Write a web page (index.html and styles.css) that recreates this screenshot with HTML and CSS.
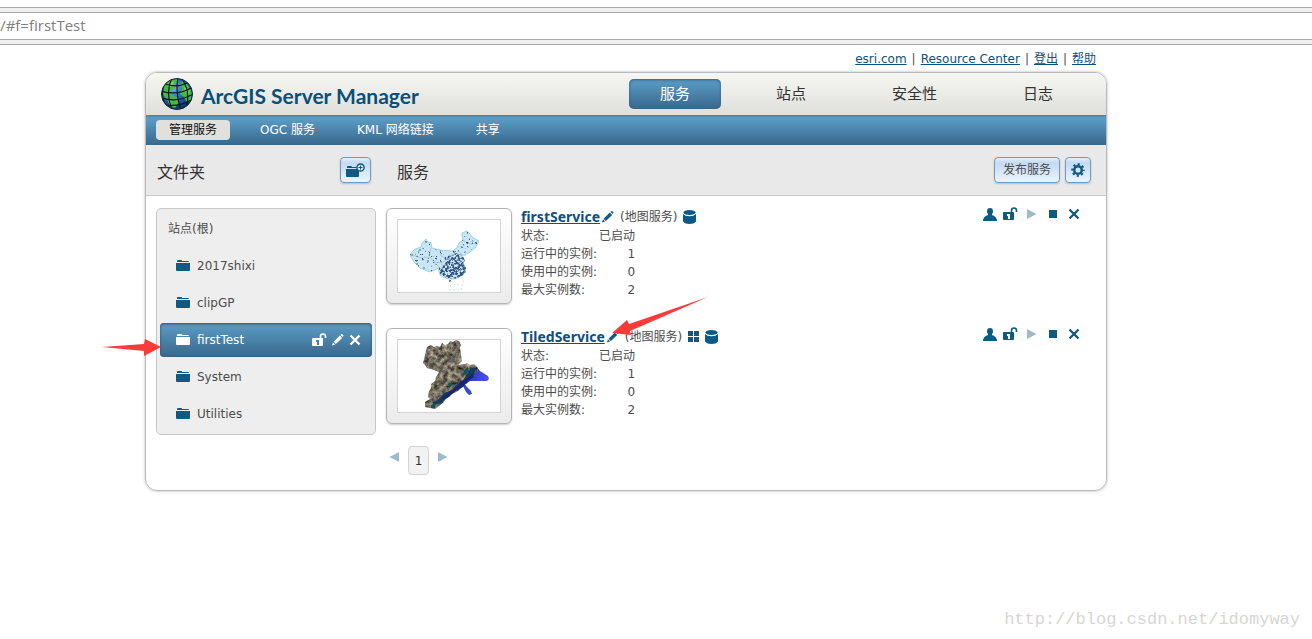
FILE: index.html
```
<!DOCTYPE html>
<html lang="zh-CN">
<head>
    <meta charset="UTF-8">
    <meta name="viewport" content="width=device-width, initial-scale=1.0">
    <title>ArcGIS Server Manager</title>
    <link rel="stylesheet" href="styles.css">
</head>
<body>
    <!-- Shared icon shapes -->
    <svg class="sprite" aria-hidden="true">
        <symbol id="folder" viewBox="0 0 14 12">
            <path d="M1 2V1q0-1 1-1h3q1 0 1 1h6q1 0 1 1z"/>
            <path d="M0 3h14v7q0 1-1 1H1q-1 0-1-1z"/>
        </symbol>
        <symbol id="unlock" viewBox="0 0 15 14">
            <path fill-rule="evenodd" d="M1 5h9q1 0 1 1v6q0 1-1 1H1q-1 0-1-1V6q0-1 1-1zM4 7v2h1v3h2V7z"/>
            <path d="M8.500 5V3.500Q8.500 1 11 1t2.500 2.500V5" fill="none" stroke="currentColor" stroke-width="1.600"/>
        </symbol>
        <symbol id="pencil" viewBox="0 0 13 13">
            <path d="M0 12.500l1-3.500 2.500 2.500zM1.700 8.300l6.800-6.600 2.500 2.500-6.800 6.600zM9.200 1l.8-.7q.6-.5 1.200 0l1 1q.6.6 0 1.200l-.6.700z"/>
        </symbol>
        <symbol id="cross" viewBox="0 0 12 12">
            <path d="M1.500 1.500l9 9M10.500 1.500l-9 9" fill="none" stroke="currentColor" stroke-width="2.300"/>
        </symbol>
        <symbol id="user" viewBox="0 0 14 13">
            <ellipse cx="7" cy="3.200" rx="3" ry="3.200"/>
            <path d="M5 5h4v2q4 1 5 5v1H0v-1q1-4 5-5z"/>
        </symbol>
        <symbol id="play" viewBox="0 0 10 10">
            <path d="M0 0l9.500 5L0 10z"/>
        </symbol>
        <symbol id="stop" viewBox="0 0 8 8">
            <path d="M0 0h8v8H0z"/>
        </symbol>
        <symbol id="database" viewBox="0 0 13 14">
            <ellipse cx="6.500" cy="2.500" rx="6" ry="2.500"/>
            <path d="M0 4q2 2.300 6.500 2.300T13 4v7.500Q11 14 6.500 14T0 11.500z"/>
        </symbol>
        <symbol id="tiles" viewBox="0 0 11 11">
            <path d="M0 0h5v5H0zM6 0h5v5H6zM0 6h5v5H0zM6 6h5v5H6z"/>
        </symbol>
    </svg>

    <div class="address-bar">
        <input type="text" class="address" value="r/#f=firstTest" aria-label="地址">
    </div>

    <div class="page">
        <div class="links">
            <a href="#">esri.com</a><span>|</span><a href="#">Resource Center</a><span>|</span><a href="#">登出</a><span>|</span><a href="#">帮助</a>
        </div>

        <div class="panel">
            <header class="header">
                <svg class="globe" viewBox="0 0 34 34">
                    <defs>
                        <radialGradient id="ocean" cx="35%" cy="30%" r="75%">
                            <stop offset="0" stop-color="#7ab8ee"/>
                            <stop offset="0.5" stop-color="#2467b4"/>
                            <stop offset="1" stop-color="#0b2f66"/>
                        </radialGradient>
                        <clipPath id="globeClip"><circle cx="17" cy="17" r="15"/></clipPath>
                    </defs>
                    <circle cx="17" cy="17" r="15.500" fill="url(#ocean)"/>
                    <g clip-path="url(#globeClip)">
                        <path fill="#48b649" d="M4 9Q9 2 17 2l2 3-5 2 1 4-4 3 1 4 5 2 2 5-4 6-5-2-3-7-4-4zM22 4l6 4 4 7-1 8-4 3-3-6-4-3 2-5-2-4z"/>
                        <path fill="#8ccf56" d="M8 7l6-3-1 4-5 3zM24 10l4 2 1 5-4-2z"/>
                        <g fill="none" stroke="#0a1a20" stroke-width="1.200">
                            <path d="M12 1Q5 15 12 33M18 1q-3 16 3 32M22 2q9 13 4 29M5 6Q-1 18 7 30"/>
                            <path d="M5 7q12 4 22-1M1 14q16 5 30-3M2 21q16 5 31-4M6 28q13 2 25-5"/>
                        </g>
                    </g>
                    <circle cx="17" cy="17" r="15.500" fill="none" stroke="#14242c"/>
                </svg>
                <h1 class="title">ArcGIS Server Manager</h1>
                <nav class="tabs">
                    <a href="#" class="tab active">服务</a>
                    <a href="#" class="tab">站点</a>
                    <a href="#" class="tab">安全性</a>
                    <a href="#" class="tab">日志</a>
                </nav>
            </header>

            <nav class="subnav">
                <a href="#" class="active">管理服务</a>
                <a href="#">OGC 服务</a>
                <a href="#">KML 网络链接</a>
                <a href="#">共享</a>
            </nav>

            <div class="toolbar">
                <div class="toolbar-folders">
                    <h2>文件夹</h2>
                    <button class="btn" aria-label="新建文件夹">
                        <svg class="new-folder" viewBox="0 0 19 14">
                            <path d="M1 5V4q0-1 1-1h3q1 0 1 1h4l1 1zM0 6h11l2 2v5q0 1-1 1H1q-1 0-1-1z"/>
                            <circle cx="14.500" cy="4.500" r="3.600" fill="#d9e9fa" stroke="currentColor" stroke-width="1.500"/>
                            <path d="M14 2.500h1V4h1.500v1H15v1.500h-1V5h-1.500V4H14z"/>
                        </svg>
                    </button>
                </div>
                <div class="toolbar-services">
                    <h2>服务</h2>
                    <button class="btn publish">发布服务</button>
                    <button class="btn" aria-label="设置">
                        <svg class="gear" viewBox="0 0 16 16">
                            <circle cx="8" cy="8" r="4.300" fill="none" stroke="currentColor" stroke-width="2.800"/>
                            <circle cx="8" cy="8" r="6.500" fill="none" stroke="currentColor" stroke-width="2.400" stroke-dasharray="2.553 2.553" stroke-dashoffset="1.276"/>
                        </svg>
                    </button>
                </div>
            </div>

            <div class="content">
                <ul class="folders">
                    <li class="root"><a href="#">站点(根)</a></li>
                    <li><a href="#"><svg class="folder"><use href="#folder"/></svg>2017shixi</a></li>
                    <li><a href="#"><svg class="folder"><use href="#folder"/></svg>clipGP</a></li>
                    <li class="selected">
                        <a href="#"><svg class="folder"><use href="#folder"/></svg>firstTest</a>
                        <button class="icon-btn" aria-label="权限"><svg class="lock"><use href="#unlock"/></svg></button>
                        <button class="icon-btn" aria-label="编辑"><svg class="pencil"><use href="#pencil"/></svg></button>
                        <button class="icon-btn" aria-label="删除"><svg class="cross"><use href="#cross"/></svg></button>
                        <svg class="arrow arrow-folder" viewBox="0 0 59 18"><path d="M0 8l42-3 1-5 16 8-17 9v-5z"/></svg>
                    </li>
                    <li><a href="#"><svg class="folder"><use href="#folder"/></svg>System</a></li>
                    <li><a href="#"><svg class="folder"><use href="#folder"/></svg>Utilities</a></li>
                </ul>

                <main class="services">
                    <article class="service">
                        <div class="thumb">
                            <svg viewBox="0 0 102 72">
                                <defs>
                                    <filter id="towns" x="0" y="0" width="1" height="1" color-interpolation-filters="sRGB">
                                        <feTurbulence type="fractalNoise" baseFrequency="0.45" numOctaves="2" seed="4"/>
                                        <feColorMatrix values="0 0 0 0 0.200  0 0 0 0 0.350  0 0 0 0 0.550  9 0 0 0 -5.700"/>
                                        <feComposite in2="SourceGraphic" operator="in"/>
                                    </filter>
                                    <filter id="cities" x="0" y="0" width="1" height="1" color-interpolation-filters="sRGB">
                                        <feTurbulence type="fractalNoise" baseFrequency="0.4" numOctaves="2" seed="9"/>
                                        <feColorMatrix values="0 0 0 0 0.200  0 0 0 0 0.320  0 0 0 0 0.520  6 0 0 0 -2.500"/>
                                        <feComposite in2="SourceGraphic" operator="in"/>
                                    </filter>
                                </defs>
                                <path fill="#c9e6f5" stroke="#8fcbd0" stroke-width="0.8" d="M12 35l2-3 3-3 3-1 3-1 1-4 4-4 2 3 3 1 1 5 8 2 12 1 5-3 2-5 4-3-1-4 0-3 5-2 3 3 2 3 7 4-3 6-6 5-5 3-4 2 4 3-2 3 3 5-1 4-2 3-8 4h-7l-5-2-3-2-2-7-3 2-5 2-10-4-6-6z"/>
                                <path fill="none" stroke="#a5bac5" stroke-width="0.7" d="M14 35l9 3 9-1 4 5 8 1 5-4M33 28l-2 8M42 30l1 6 7 3 8-6M60 30l4 5M65 20l7 4 7-1M36 42l5 5"/>
                                <path fill="#000" filter="url(#towns)" d="M12 35l5-6 6-2 5-8 5 4 1 5 8 2 12 1 5-3 2-5 4-3-1-7 5-2 5 6 7 4-3 6-6 5-9 5 4 3-2 3 3 5-3 7-8 4h-7l-8-4-2-7-8 4-10-4-6-6z"/>
                                <path fill="#000" filter="url(#cities)" d="M50 36l9-3 5 2 3 5-2 3 3 5-3 7-8 4h-7l-8-5-1-6 6-4z"/>
                                <g fill="#28517c">
                                    <circle cx="52" cy="61" r="1"/><circle cx="14" cy="35" r="0.700"/><circle cx="22" cy="30" r="0.800"/><circle cx="28" cy="22" r="0.800"/><circle cx="19" cy="44" r="0.700"/><circle cx="30" cy="41" r="0.800"/><circle cx="26" cy="48" r="0.700"/><circle cx="67" cy="52" r="0.800"/>
                                </g>
                                <path fill="none" stroke="#c6e6e1" stroke-dasharray="2 2" d="M53 61l-1 9h11l3-10M55 65l7-1"/>
                            </svg>
                        </div>
                        <div class="info">
                            <div class="name">
                                <a href="#">firstService</a>
                                <svg class="pencil"><use href="#pencil"/></svg>
                                <span>(地图服务)</span>
                                <svg class="database"><use href="#database"/></svg>
                            </div>
                            <table class="stats">
                                <tr><th>状态:</th><td>已启动</td></tr>
                                <tr><th>运行中的实例:</th><td>1</td></tr>
                                <tr><th>使用中的实例:</th><td>0</td></tr>
                                <tr><th>最大实例数:</th><td>2</td></tr>
                            </table>
                        </div>
                        <div class="actions">
                            <button class="icon-btn" aria-label="用户"><svg class="user"><use href="#user"/></svg></button>
                            <button class="icon-btn" aria-label="权限"><svg class="lock"><use href="#unlock"/></svg></button>
                            <button class="icon-btn" aria-label="启动" disabled><svg class="play"><use href="#play"/></svg></button>
                            <button class="icon-btn" aria-label="停止"><svg class="stop"><use href="#stop"/></svg></button>
                            <button class="icon-btn" aria-label="删除"><svg class="cross"><use href="#cross"/></svg></button>
                        </div>
                    </article>

                    <article class="service">
                        <div class="thumb">
                            <svg viewBox="0 0 102 72">
                                <defs>
                                    <filter id="terrain" x="0" y="0" width="1" height="1" color-interpolation-filters="sRGB">
                                        <feTurbulence type="fractalNoise" baseFrequency="0.22" numOctaves="4" seed="7"/>
                                        <feColorMatrix values="0.900 0 0 0 0  0.850 0.100 0 0 -0.050  0.800 0 0.100 0 -0.080  0 0 0 0 1"/>
                                        <feComposite in2="SourceGraphic" operator="in"/>
                                    </filter>
                                    <linearGradient id="sea" x1="0" y1="0" x2="1" y2="0.300">
                                        <stop offset="0" stop-color="#1d2f8c"/>
                                        <stop offset="1" stop-color="#4a50ee"/>
                                    </linearGradient>
                                </defs>
                                <path fill="url(#sea)" d="M72 29l7-2 3 4 8 5 1 3-2 2-17 0-4 3-3-3z"/>
                                <path fill="#3c4bc4" d="M66 43l3 4 4 4 1 3-3 1-3-3-4-8z"/>
                                <path filter="url(#terrain)" d="M29 7l4-2 3 2 3-1 3 1 2-4 3 2 3-1 2-3 3 1 3-2 3 1 2 4-1 3 1 7 1 6-4 4 7-1 2-1 3 2 4-1 3 3 1 4-6 4-6 3-3 8-5 5-10 5-5 7-8 6-5-1-5-1v-5l5-3-2-2 1-6 2-3v-4l4-3 1-4 3-5-5-2-7-2-2-3-2-2z"/>
                                <path fill="#143c60" d="M78 28l-2 7-8 5-4 7-9 4-5 6-7 6-7 2-2-3 6-2 6-7 8-3 4-5 6-3 5-8 4-6z"/>
                                <path fill="#1b2474" d="M74 34l-7 6-5 1-2 5-6 4-6 4-5 7 8-4 5-5 9-5 5-6 6-4z"/>
                                <path fill="#12545c" d="M66 30l4-3 1 4-3 3-3 1zM50 44l4-2 1 3-4 3zM33 65l5-2-1 5h-4z"/>
                            </svg>
                        </div>
                        <div class="info">
                            <div class="name">
                                <a href="#">TiledService</a>
                                <svg class="pencil"><use href="#pencil"/></svg>
                                <span>(地图服务)</span>
                                <svg class="tiles"><use href="#tiles"/></svg>
                                <svg class="database"><use href="#database"/></svg>
                                <svg class="arrow arrow-edit" viewBox="0 0 96 38"><path d="M0 36l15-13 2 4L96 0 18 34l1 4z"/></svg>
                            </div>
                            <table class="stats">
                                <tr><th>状态:</th><td>已启动</td></tr>
                                <tr><th>运行中的实例:</th><td>1</td></tr>
                                <tr><th>使用中的实例:</th><td>0</td></tr>
                                <tr><th>最大实例数:</th><td>2</td></tr>
                            </table>
                        </div>
                        <div class="actions">
                            <button class="icon-btn" aria-label="用户"><svg class="user"><use href="#user"/></svg></button>
                            <button class="icon-btn" aria-label="权限"><svg class="lock"><use href="#unlock"/></svg></button>
                            <button class="icon-btn" aria-label="启动" disabled><svg class="play"><use href="#play"/></svg></button>
                            <button class="icon-btn" aria-label="停止"><svg class="stop"><use href="#stop"/></svg></button>
                            <button class="icon-btn" aria-label="删除"><svg class="cross"><use href="#cross"/></svg></button>
                        </div>
                    </article>

                    <div class="pager">
                        <button class="icon-btn" aria-label="上一页" disabled><svg class="play prev"><use href="#play"/></svg></button>
                        <button class="page-number">1</button>
                        <button class="icon-btn" aria-label="下一页" disabled><svg class="play"><use href="#play"/></svg></button>
                    </div>
                </main>
            </div>
        </div>
    </div>

    <footer class="footer">http://blog.csdn.net/idomyway</footer>
</body>
</html>
```

FILE: styles.css
```
* {
    margin: 0;
    padding: 0;
    box-sizing: border-box;
}

body {
    min-height: 100vh;
    display: flex;
    flex-direction: column;
    background: #fff;
    color: #4c4c4c;
    font-family: Verdana, "DejaVu Sans", "Noto Sans CJK SC", sans-serif;
    font-size: 12px;
    line-height: 18px;
}

button {
    font: inherit;
    color: inherit;
    cursor: pointer;
}

a {
    color: #0f4f7d;
}

svg {
    display: block;
    flex: none;
    fill: currentColor;
}

.sprite {
    position: absolute;
    width: 0;
    height: 0;
}

/* Address bar */
.address-bar {
    margin-top: 7px;
    padding: 4px 0;
    background: #f0f0f0;
    border-top: 1px solid #aaa;
    border-bottom: 1px solid #aaa;
}

.address {
    display: block;
    width: 100%;
    height: 28px;
    padding-bottom: 2px;
    border: 1px solid #aaa;
    border-width: 1px 0;
    background: #fff;
    color: #808080;
    font-family: "Open Sans", sans-serif;
    font-size: 15px;
    text-indent: -6px;
}

/* Page */
.page {
    padding: 4px 205px 0 145px;
}

.links {
    display: flex;
    justify-content: flex-end;
    gap: 5px;
    padding: 1px 11px 4px;
}

.panel {
    border: 1px solid #bbb;
    border-radius: 12px;
    box-shadow: 0 0 3px rgba(0, 0, 0, 0.3);
}

/* Header */
.header {
    display: flex;
    align-items: center;
    height: 42px;
    padding: 0 22px 0 14px;
    border-radius: 11px 11px 0 0;
    background: linear-gradient(#f6f7f2, #dfe0dc);
}

.globe {
    width: 34px;
    height: 34px;
}

.title {
    margin-left: 7px;
    padding-top: 4px;
    color: #0a4f78;
    font-family: Lato, sans-serif;
    font-size: 21px;
    font-weight: bold;
    line-height: 24px;
}

.tabs {
    display: flex;
    gap: 24px;
    margin-left: auto;
}

.tab {
    padding: 0 31px;
    border-radius: 5px;
    color: #333;
    font-size: 15px;
    line-height: 30px;
    text-decoration: none;
}

.tab.active {
    background: linear-gradient(#5b9dc6, #3a678b);
    box-shadow: inset 0 1px 3px #2c5f86;
    color: #fff;
}

.subnav {
    display: flex;
    align-items: center;
    gap: 18px;
    height: 30px;
    padding: 0 10px;
    background: linear-gradient(#4382ac, #5b9dc6 10%, #3a678b);
}

.subnav a {
    padding: 0 12px;
    border-radius: 4px;
    color: #fff;
    line-height: 20px;
    text-decoration: none;
}

.subnav .active {
    padding: 0 13px;
    background: #e0e1dd;
    color: #111;
}

/* Toolbar */
.toolbar {
    display: flex;
    height: 51px;
    background: #e9e9e9;
    border-bottom: 1px solid #c8c8c8;
}

.toolbar h2 {
    margin-right: auto;
    padding-top: 6px;
    color: #333;
    font-size: 16px;
    font-weight: normal;
    line-height: 24px;
}

.toolbar-folders,
.toolbar-services {
    display: flex;
    align-items: center;
    gap: 5px;
    padding: 0 15px 0 11px;
}

.toolbar-folders {
    width: 240px;
}

.toolbar-services {
    flex: 1;
}

.btn {
    display: flex;
    align-items: center;
    height: 26px;
    padding: 0 5px;
    border: 1px solid #7199c2;
    border-radius: 4px;
    background: linear-gradient(#e4effb, #c3daf4 20%, #ecf4fd);
    box-shadow: 0 1px 2px rgba(0, 0, 0, 0.2);
    color: #0f5a82;
}

.publish {
    padding: 0 8px;
    color: #4c4c4c;
}

.new-folder {
    width: 19px;
    height: 14px;
}

.gear {
    width: 14px;
    height: 14px;
}

/* Content */
.content {
    display: flex;
    align-items: flex-start;
    gap: 10px;
    padding: 12px 25px 15px 10px;
}

.folders {
    display: flex;
    flex-direction: column;
    gap: 3px;
    width: 220px;
    padding: 3px;
    border: 1px solid #c8c8c8;
    border-radius: 5px;
    background: #eee;
    list-style: none;
}

.folders li {
    position: relative;
    display: flex;
    align-items: center;
    gap: 5px;
    height: 34px;
    padding: 0 11px 0 16px;
    border-radius: 4px;
}

.folders .root {
    padding-left: 8px;
}

.folders a {
    display: flex;
    align-items: center;
    flex: 1;
    gap: 7px;
    color: #4c4c4c;
    text-decoration: none;
}

.folder {
    width: 14px;
    height: 12px;
    color: #0f5a82;
}

.folders .selected {
    background: linear-gradient(#5b9dc6, #3a678b);
    box-shadow: inset 0 1px 3px #23506f;
}

.selected a,
.selected .folder,
.selected .icon-btn {
    color: #fff;
}

/* Icons */
.icon-btn {
    display: flex;
    align-items: center;
    justify-content: center;
    border: none;
    background: none;
    color: #0f5a82;
}

.icon-btn:disabled {
    color: #9dbbcd;
}

.lock {
    width: 15px;
    height: 14px;
}

.pencil {
    width: 12px;
    height: 12px;
}

.cross {
    width: 12px;
    height: 12px;
}

.user {
    width: 14px;
    height: 13px;
}

.play {
    width: 10px;
    height: 10px;
}

.prev {
    transform: scaleX(-1);
}

.stop {
    width: 8px;
    height: 8px;
}

.database {
    width: 13px;
    height: 14px;
}

.tiles {
    width: 11px;
    height: 11px;
}

/* Services */
.services {
    flex: 1;
}

.service {
    display: flex;
    align-items: flex-start;
    gap: 9px;
    margin-bottom: 24px;
}

.thumb {
    padding: 10px;
    border: 1px solid #b4b4b4;
    border-radius: 6px;
    background: linear-gradient(#fff, #ebebeb);
    box-shadow: 0 1px 2px rgba(0, 0, 0, 0.2);
}

.thumb svg {
    width: 104px;
    height: 74px;
    border: 1px solid #d4d4d4;
    background: #fff;
}

.name {
    position: relative;
    display: flex;
    align-items: center;
    gap: 6px;
    height: 17px;
    margin-bottom: 2px;
    color: #0a5a87;
}

.name a {
    margin-right: -4px;
    font-family: "Noto Sans", sans-serif;
    font-size: 14px;
    font-weight: bold;
}

.name span {
    color: #4c4c4c;
}

.stats {
    border-collapse: collapse;
}

.stats th {
    width: 78px;
    font-weight: normal;
    text-align: left;
}

.stats td {
    text-align: right;
}

.actions {
    display: flex;
    gap: 6px;
    margin-left: auto;
}

.actions .icon-btn {
    width: 15px;
    height: 12px;
}

.pager {
    display: flex;
    gap: 9px;
    margin-top: -2px;
    padding-left: 3px;
}

.pager .icon-btn {
    height: 22px;
}

.page-number {
    width: 21px;
    height: 29px;
    border: 1px solid #d2d2d2;
    border-radius: 4px;
    background: #f2f2f2;
    color: #333;
}

/* Red pointers over the page */
.arrow {
    position: absolute;
    color: #fb3b39;
}

.arrow-folder {
    left: -58px;
    top: 16px;
    width: 59px;
    height: 18px;
}

.arrow-edit {
    left: 91px;
    top: -31px;
    width: 96px;
    height: 38px;
}

.footer {
    margin-top: auto;
    padding: 0 12px 8px;
    color: #d6d6d2;
    font-family: "Liberation Mono", monospace;
    font-size: 17px;
    line-height: 22px;
    text-align: right;
}
```
